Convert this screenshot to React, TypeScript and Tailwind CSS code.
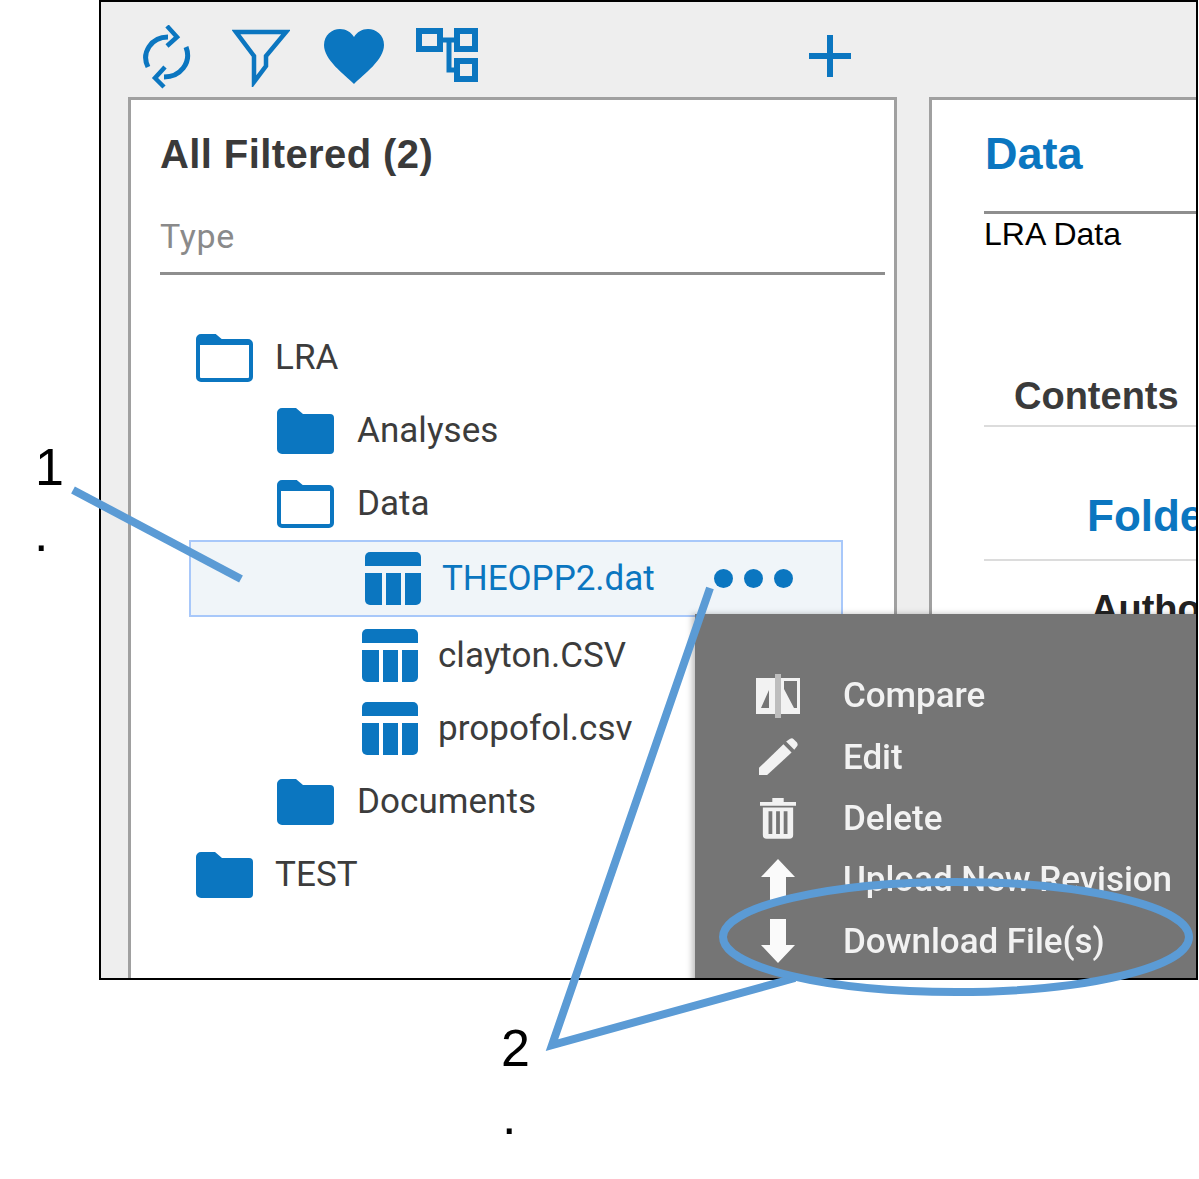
const FolderOutline = () => (
  <svg width="59" height="48" viewBox="0 0 59 48" className="shrink-0">
    <path d="M3 14V5a3 3 0 0 1 3-3h14l6 5h27a3 3 0 0 1 3 3v33a3 3 0 0 1-3 3H6a3 3 0 0 1-3-3z" fill="#fff" stroke="#0b76c0" strokeWidth="4" />
    <path d="M2 10V5a4 4 0 0 1 4-4h14l7 6h-5z" fill="#0b76c0" />
    <rect x="2" y="7" width="54" height="4" fill="#0b76c0" />
  </svg>
);

const FolderFilled = () => (
  <svg width="59" height="48" viewBox="0 0 59 48" className="shrink-0">
    <path d="M1 6a5 5 0 0 1 5-5h14l7 6h27a4 4 0 0 1 4 4v32a4 4 0 0 1-4 4H6a5 5 0 0 1-5-5z" fill="#0b76c0" />
  </svg>
);

const TableIcon = () => (
  <svg width="56" height="53" viewBox="0 0 56 53" className="shrink-0" fill="#0b76c0">
    <path d="M0 14V5a5 5 0 0 1 5-5h46a5 5 0 0 1 5 5v9z" />
    <path d="M0 21h17v32H5a5 5 0 0 1-5-5z" />
    <rect x="21" y="21" width="15" height="32" />
    <path d="M40 21h16v27a5 5 0 0 1-5 5H40z" />
  </svg>
);

const Toolbar = () => (
  <div className="flex h-[95px] shrink-0 items-start">
    <svg width="50" height="64" viewBox="0 0 50 64" className="ml-[40px] mt-[23px] shrink-0" fill="none" stroke="#0b76c0" strokeWidth="5">
      <path d="M7 42C0 28 10 12 27 12" />
      <path d="M45 22c6 16-6 30-22 30" />
      <path d="M26 1l10 11-10 9" strokeWidth="4.5" />
      <path d="M24 42L14 53l9 9" strokeWidth="4.5" />
    </svg>
    <svg width="58" height="58" viewBox="0 0 58 58" className="ml-[41px] mt-[27px] shrink-0" fill="none" stroke="#0b76c0" strokeWidth="4.5" strokeLinejoin="miter">
      <path d="M4 3h50L34 27v10L22 53V27z" />
    </svg>
    <svg width="60" height="55" viewBox="0 0 60 55" className="ml-[34px] mt-[27px] shrink-0" fill="#0b76c0">
      <path d="M30 55C20 45 0 31 0 16 0 6 8 0 16 0c6 0 11 3 14 8 3-5 8-8 14-8 8 0 16 6 16 16 0 15-20 29-30 39z" />
    </svg>
    <svg width="62" height="55" viewBox="0 0 62 55" className="ml-[32px] mt-[26px] shrink-0" fill="none" stroke="#0b76c0" strokeWidth="6">
      <rect x="3" y="3" width="21" height="18" />
      <rect x="41" y="3" width="18" height="18" />
      <rect x="41" y="33" width="18" height="18" />
      <path d="M24 12h17M33 12v30h8" strokeWidth="5" />
    </svg>
    <svg width="44" height="44" viewBox="0 0 44 44" className="ml-[330px] mt-[32px] shrink-0" stroke="#0b76c0" strokeWidth="6">
      <path d="M22 1v42M1 22h42" />
    </svg>
  </div>
);

const Row = ({ pad, icon, label, gap = 22 }: { pad: string; icon: React.ReactNode; label: string; gap?: number }) => (
  <div className={`flex h-[73px] items-center ${pad}`}>
    {icon}
    <span className="text-[35px] leading-none tracking-[0.05px] text-[#3c3c3c]" style={{ marginLeft: gap }}>
      {label}
    </span>
  </div>
);

const LeftPanel = () => (
  <div className="ml-[27px] flex h-[900px] w-[769px] shrink-0 flex-col border-[3px] border-[#a0a0a0] bg-white pl-[29px] pt-[31px]">
    <h1 className="font-['Liberation_Sans'] text-[40px] font-bold leading-[46px] tracking-[0.4px] text-[#3a3a3a]">All Filtered (2)</h1>
    <div className="mt-[38px] w-[725px] border-b-[3px] border-[#8e8e8e] pb-[15px] text-[34px] leading-[42px] tracking-[0.7px] text-[#8a8a8a]">Type</div>
    <div className="ml-[29px] mt-[46px] w-[654px]">
      <Row pad="pl-[6px]" icon={<FolderOutline />} label="LRA" gap={21} />
      <Row pad="pl-[87px]" icon={<FolderFilled />} label="Analyses" />
      <Row pad="pl-[87px]" icon={<FolderOutline />} label="Data" />
      <div className="flex h-[77px] items-center border-2 border-[#a8c8fa] bg-[#f0f5f9] pl-[174px]">
        <TableIcon />
        <span className="ml-[21px] text-[35px] leading-none tracking-[-0.05px] text-[#0b76c0]">THEOPP2.dat</span>
        <div className="ml-[59px] flex gap-[11px]">
          <span className="size-[19px] rounded-full bg-[#0b76c0]" />
          <span className="size-[19px] rounded-full bg-[#0b76c0]" />
          <span className="size-[19px] rounded-full bg-[#0b76c0]" />
        </div>
      </div>
      <div className="mt-[2px]">
        <Row pad="pl-[173px]" icon={<TableIcon />} label="clayton.CSV" gap={20} />
      </div>
      <Row pad="pl-[173px]" icon={<TableIcon />} label="propofol.csv" gap={20} />
      <Row pad="pl-[87px]" icon={<FolderFilled />} label="Documents" />
      <Row pad="pl-[6px]" icon={<FolderFilled />} label="TEST" gap={21} />
    </div>
  </div>
);

const RightPanel = () => (
  <div className="ml-[32px] flex h-[900px] w-[400px] shrink-0 flex-col border-[3px] border-[#a0a0a0] bg-white pl-[52px] pt-[28px] font-['Liberation_Sans']">
    <div className="pl-px text-[45px] font-bold leading-[52px] text-[#0b76c0]">Data</div>
    <div className="mt-[31px] border-t-[3px] border-[#8e8e8e] pt-[2px] text-[32px] leading-[36px] text-black">LRA Data</div>
    <div className="mt-[122px] border-b-2 border-[#dcdcdc] pb-[7px] pl-[30px] text-[38px] font-bold leading-[44px] text-[#3a3a3a]">Contents</div>
    <div className="mt-[63px] border-b-2 border-[#dcdcdc] pb-[17px] pl-[103px] text-[44px] font-bold leading-[52px] text-[#0b76c0]">Folder</div>
    <div className="mt-[26px] pl-[107px] text-[38px] font-bold leading-[44px] text-[#222]">Author</div>
  </div>
);

const IconCompare = () => (
  <svg width="44" height="44" viewBox="0 0 44 44" fill="#f2f2f2">
    <path fillRule="evenodd" d="M0 4h19v36H0zM13 16L5 34h8z" />
    <path fillRule="evenodd" d="M25 4h19v36H25zM28 7v8l10 19h3V7z" />
    <rect x="19" y="0" width="6" height="44" fill="#bdbdbd" />
  </svg>
);
const IconEdit = () => (
  <svg width="40" height="38" viewBox="0 0 44 42" fill="#f2f2f2">
    <path d="M1 33L28 7l9 9L10 41H1z" />
    <path d="M31 4l4-3c2-1 3-1 4 0l4 4c1 2 1 3 0 4l-3 4z" />
  </svg>
);
const IconTrash = () => (
  <svg width="36" height="44" viewBox="0 0 38 44" fill="#f2f2f2">
    <path d="M0 5h13V1h12v4h13v4H0z" />
    <path fillRule="evenodd" d="M3 11h32v29a4 4 0 0 1-4 4H7a4 4 0 0 1-4-4zM9 15v24h4V15zM17 15v24h4V15zM25 15v24h4V15z" />
  </svg>
);
const IconUp = () => (
  <svg width="36" height="42" viewBox="0 0 36 42" fill="#fafafa">
    <path d="M18 0l17 18H26v24H10V18H1z" />
  </svg>
);
const IconDown = () => (
  <svg width="36" height="44" viewBox="0 0 36 44" fill="#fafafa">
    <path d="M10 0h16v26h9L18 44 1 26h9z" />
  </svg>
);

const menuItems = [
  { icon: <IconCompare />, label: 'Compare' },
  { icon: <IconEdit />, label: 'Edit' },
  { icon: <IconTrash />, label: 'Delete' },
  { icon: <IconUp />, label: 'Upload New Revision' },
  { icon: <IconDown />, label: 'Download File(s)' },
];

const ActionMenu = () => (
  <div className="absolute left-[594px] top-[612px] h-[370px] w-[510px] bg-[#757575] pt-[51px] shadow-[-3px_0_6px_rgba(0,0,0,0.25)]">
    {menuItems.map((item) => (
      <div key={item.label} className="flex h-[61.4px] items-center">
        <div className="flex w-[148px] justify-center pl-[18px]">{item.icon}</div>
        <span className="text-[35px] font-medium leading-none tracking-[-0.05px] text-[#f2f2f2] blur-[0.4px]">{item.label}</span>
      </div>
    ))}
  </div>
);

const Callouts = () => (
  <>
    <svg width="1199" height="1179" className="pointer-events-none absolute left-0 top-0" fill="none" stroke="#5b9bd5" strokeWidth="8">
      <path d="M73 490L241 579" />
      <path d="M710 588L552 1045L795 978" />
      <ellipse cx="956" cy="937" rx="233" ry="55" />
    </svg>
    <span className="absolute left-[35px] top-[438px] font-['Liberation_Sans'] text-[52px] leading-[58px] text-black">1</span>
    <span className="absolute left-[34px] top-[504px] font-['Liberation_Sans'] text-[52px] leading-[58px] text-black">.</span>
    <span className="absolute left-[501px] top-[1019px] font-['Liberation_Sans'] text-[52px] leading-[58px] text-black">2</span>
    <span className="absolute left-[502px] top-[1087px] font-['Liberation_Sans'] text-[52px] leading-[58px] text-black">.</span>
  </>
);

export default function App() {
  return (
    <div className="relative h-[1179px] w-[1199px] overflow-hidden bg-white font-['Roboto',sans-serif]">
      <div className="relative ml-[99px] h-[980px] w-[1099px] overflow-hidden border-2 border-black bg-[#eeeeee]">
        <Toolbar />
        <div className="flex">
          <LeftPanel />
          <RightPanel />
        </div>
        <ActionMenu />
      </div>
      <Callouts />
    </div>
  );
}
